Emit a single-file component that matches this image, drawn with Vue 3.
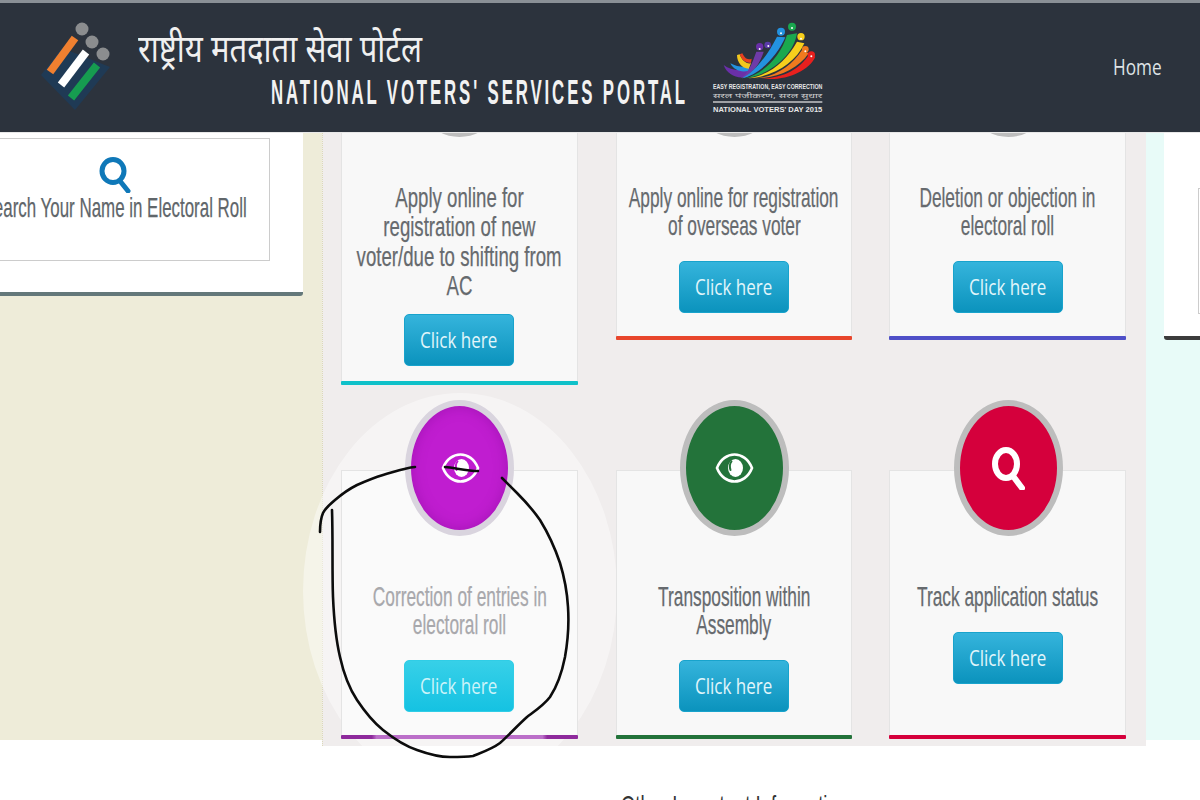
<script setup>
const rows = [
  [
    { lines: ['Apply online for', 'registration of new', 'voter/due to shifting from', 'AC'], color: '#0fc1c9', ring: '#bdbdbd', icon: 'eye', tight: true },
    { lines: ['Apply online for registration', 'of overseas voter'], color: '#e8462c', ring: '#bdbdbd', icon: 'eye' },
    { lines: ['Deletion or objection in', 'electoral roll'], color: '#4f50c8', ring: '#bdbdbd', icon: 'search' }
  ],
  [
    { lines: ['Correction of entries in', 'electoral roll'], color: '#c01dd0', bar: '#8e2a9c', ring: '#d9d4de', icon: 'eye', active: true },
    { lines: ['Transposition within', 'Assembly'], color: '#23733a', bar: '#23733a', ring: '#bdbdbd', icon: 'eye' },
    { lines: ['Track application status'], color: '#d5003c', bar: '#d5003c', ring: '#bdbdbd', icon: 'search' }
  ]
]
const dots = [[238, 147, 3], [264, 138, 3], [302, 100, 3], [335, 84, 3], [362, 116, 3], [375, 154, 3], [393, 169, 3]]
</script>

<template>
  <div class="page">
    <header class="header">
      <svg class="ballot" width="80" height="96" viewBox="36 22 80 96">
        <path d="M41 75 L62 48 L110 67 L75 110 Z" fill="#1f3a55" />
        <g stroke-width="8" stroke-linecap="butt">
          <path d="M75 38 L50 72" stroke="#f08030" />
          <path d="M86 52 L61 85" stroke="#ffffff" />
          <path d="M97 65 L71 98" stroke="#169c50" />
        </g>
        <g fill="#8b8d8f">
          <circle cx="82" cy="29" r="6.5" />
          <circle cx="92" cy="42" r="6.5" />
          <circle cx="103" cy="54" r="6.5" />
        </g>
      </svg>
      <div class="brand">
        <div class="hindi"><span class="hindi-in">राष्ट्रीय मतदाता सेवा पोर्टल</span></div>
        <div class="english"><span class="english-in">NATIONAL VOTERS' SERVICES PORTAL</span></div>
      </div>
      <svg class="nvd" width="112" height="95" viewBox="95 60 336 285">
        <path d="M130 195 C140 225 175 240 205 228 L205 205 C180 215 150 210 130 195 Z" fill="#6a2fa8" />
        <path d="M150 190 C160 212 185 218 205 212 L208 198 C190 204 170 200 150 190 Z" fill="#2392e0" />
        <path d="M170 165 C170 188 185 205 205 206 L212 190 C195 192 185 180 178 163 Z" fill="#f2c81e" />
        <path d="M178 163 C185 180 195 190 212 188 L214 176 C200 182 192 172 186 160 Z" fill="#e8401e" />
        <path d="M180 235 C205 220 215 190 228 155 L250 155 C240 190 215 225 180 235 Z" fill="#6f3ba8" />
        <path d="M185 235 C225 215 265 160 290 110 L315 112 C290 170 235 225 185 235 Z" fill="#2392e0" />
        <path d="M195 235 C250 220 300 170 320 105 L350 100 C340 165 270 225 195 235 Z" fill="#1aa84f" />
        <path d="M205 235 C270 225 320 180 350 125 L372 130 C345 190 280 230 205 235 Z" fill="#f7cf1c" />
        <path d="M225 235 C290 230 335 195 365 150 L385 160 C355 205 295 235 225 235 Z" fill="#f07a1e" />
        <path d="M245 235 C310 235 360 205 385 165 L405 170 C385 215 310 245 245 235 Z" fill="#e8201e" />
        <circle cx="238" cy="140" r="11" fill="#6a2fa8" />
        <circle cx="262" cy="135" r="10" fill="#5a3aa8" />
        <circle cx="302" cy="95" r="12" fill="#2392e0" />
        <circle cx="335" cy="80" r="12" fill="#1aa84f" />
        <circle cx="362" cy="110" r="11" fill="#f7cf1c" />
        <circle cx="375" cy="148" r="10" fill="#f07a1e" />
        <circle cx="393" cy="165" r="11" fill="#e8201e" />
        <circle v-for="d in dots" :key="d[0]" :cx="d[0]" :cy="d[1]" :r="d[2]" fill="#fff" />
        <text x="98" y="268" class="nvd-t" textLength="328" lengthAdjust="spacingAndGlyphs">EASY REGISTRATION, EASY CORRECTION</text>
        <text x="98" y="294" class="nvd-h" textLength="328" lengthAdjust="spacingAndGlyphs">सरल पंजीकरण, सरल सुधार</text>
        <rect x="98" y="304" width="328" height="4" fill="#d8d8d8" />
        <text x="98" y="335" class="nvd-t" textLength="328" lengthAdjust="spacingAndGlyphs">NATIONAL VOTERS' DAY 2015</text>
      </svg>
      <nav class="nav"><span class="nav-in">Home</span></nav>
    </header>

    <main class="main">
      <div class="left">
        <section class="panel">
          <div class="search-box">
            <svg class="search-blue" width="32" height="36" viewBox="0 0 32 36">
              <ellipse cx="14" cy="14" rx="11" ry="11.5" fill="none" stroke="#0f78b8" stroke-width="5" />
              <path d="M21 24 L29 34" stroke="#0f78b8" stroke-width="5" stroke-linecap="round" />
            </svg>
            <span class="search-text">Search Your Name in Electoral Roll</span>
          </div>
        </section>
      </div>

      <div class="center">
        <div v-for="(row, r) in rows" :key="r" class="row" :class="{ 'row-first': r === 0 }">
          <article v-for="card in row" :key="card.lines[0]" class="card" :class="{ active: card.active, tight: card.tight }">
            <div class="disc" :style="{ background: card.color, borderColor: card.ring }">
              <svg v-if="card.icon === 'eye'" width="40" height="32" viewBox="-2 0 40 32" fill="none" stroke="#fff">
                <path d="M1 16 C8 -2 29 -2 36 16 C29 34 8 34 1 16 Z" stroke-width="2.6" />
                <ellipse cx="19.5" cy="16" rx="7.5" ry="9" fill="#fff" stroke="none" />
                <path d="M15.5 9.5 C13.5 12 13.5 15 14.5 18" :stroke="card.color" stroke-width="2" stroke-linecap="round" />
              </svg>
              <svg v-else width="34" height="44" viewBox="0 0 34 44" fill="none" stroke="#fff" stroke-width="6">
                <ellipse cx="15" cy="18" rx="11" ry="14" />
                <path d="M22 30 L31 42" stroke-linecap="round" />
              </svg>
            </div>
            <h3 class="title">
              <span v-for="line in card.lines" :key="line" class="line">{{ line }}</span>
            </h3>
            <a class="btn"><span class="btn-in">Click here</span></a>
            <div class="bar" :style="{ background: card.bar || card.color }"></div>
          </article>
        </div>
      </div>

      <div class="right">
        <section class="panel-right">
          <div class="box-right"></div>
        </section>
      </div>
    </main>

    <h2 class="other"><span class="other-in">Other Important Information</span></h2>

    <div class="ripple"></div>

    <svg class="pen" width="1200" height="800" viewBox="0 0 1200 800" fill="none" stroke="#0c0c0c" stroke-width="2.6" stroke-linecap="round" stroke-linejoin="round">
      <path d="M415 467 C404 468 394 472 383 475 C373 478 366 481 357 485 C349 489 342 494 335 500 C329 505 325 509 323 513 C320 520 320 526 320 532" />
      <path d="M332 510 C333 540 332 570 333 597 C334 620 336 640 340 657 C344 675 349 688 357 700 C365 712 373 722 383 730 C393 738 405 746 417 750 C428 754 440 757 450 757 C458 757 466 757 473 756 C483 752 492 749 500 743 C509 735 518 725 527 717 C535 711 544 705 550 697 C558 685 562 672 565 657 C568 640 569 622 568 607 C567 590 564 576 560 563 C555 548 548 533 540 520 C533 510 525 501 517 493 C512 488 507 483 502 478" />
      <path d="M445 467 C455 468 468 471 478 471" />
    </svg>
  </div>
</template>

<style>
body { margin: 0; background: #fff; }
</style>

<style scoped>
.page {
  position: relative;
  width: 1200px;
  height: 800px;
  overflow: hidden;
  background: #fff;
  font-family: "Open Sans", "Noto Sans", sans-serif;
}
.header {
  position: relative;
  z-index: 5;
  box-sizing: border-box;
  height: 133px;
  display: flex;
  align-items: flex-start;
  background: #2c333d;
  border-top: 3px solid #8a9096;
  border-bottom: 1px solid #e8e8e8;
}
.ballot { margin: 19px 0 0 36px; flex: none; }
.brand { margin-left: 22px; width: 549px; flex: none; }
.hindi {
  margin-top: 25px;
  height: 44px;
  color: #f0f0f0;
  font-size: 38px;
  line-height: 50px;
  white-space: nowrap;
  font-family: "Noto Sans Devanagari", "Lohit Devanagari", "Noto Sans", sans-serif;
}
.hindi-in {
  display: inline-block;
  transform: scaleX(0.816);
  transform-origin: left center;
}
.english {
  margin: 0 0 0 133px;
  color: #f2f2f2;
  font-family: "Liberation Sans", sans-serif;
  font-size: 35px;
  font-weight: 700;
  line-height: 40px;
  letter-spacing: 6px;
  white-space: nowrap;
}
.english-in {
  display: inline-block;
  transform: scaleX(0.48);
  transform-origin: left center;
}
.nvd { margin: 17px 0 0 25px; flex: none; }
.nvd-t { font: bold 21px "Liberation Sans", sans-serif; fill: #e6e6e6; }
.nvd-h { font: 20px "Noto Sans Devanagari", "Noto Sans", sans-serif; fill: #cfcfcf; }
.nav {
  margin: 49px 0 0 auto;
  padding-right: 39px;
  width: 48px;
  color: #dfe3e6;
  font-size: 21px;
  line-height: 30px;
  white-space: nowrap;
}
.nav-in {
  display: inline-block;
  transform: scaleX(0.82);
  transform-origin: left center;
}
.main {
  display: flex;
  align-items: flex-start;
  margin-top: -133px;
}
.left {
  flex: none;
  box-sizing: border-box;
  width: 322px;
  height: 740px;
  padding-top: 133px;
  background: #eeecd9;
}
.panel {
  box-sizing: border-box;
  width: 303px;
  height: 163px;
  padding-top: 5px;
  background: #fff;
  border-bottom: 4px solid #64787a;
  border-bottom-right-radius: 3px;
}
.search-box {
  box-sizing: border-box;
  width: 311px;
  height: 123px;
  margin-left: -41px;
  padding-top: 18px;
  border: 1px solid #ccc;
  display: flex;
  flex-direction: column;
  align-items: center;
}
.search-text {
  margin-top: -1px;
  color: #60666a;
  font-family: "Liberation Sans", sans-serif;
  font-size: 28px;
  line-height: 32px;
  white-space: nowrap;
  transform: scaleX(0.604);
  -webkit-text-stroke: 0.25px currentColor;
}
.center {
  flex: none;
  box-sizing: border-box;
  width: 824px;
  height: 746px;
  padding: 71px 20px 0 18px;
  background: #f0eded;
  border-left: 1px dotted #dcd9b8;
}
.row {
  display: grid;
  grid-template-columns: 237px 237px 237px;
  column-gap: 37px;
  margin-top: 85px;
}
.row-first { align-items: start; margin-top: 0; }
.card {
  position: relative;
  z-index: 1;
  box-sizing: border-box;
  min-height: 269px;
  display: flex;
  flex-direction: column;
  align-items: center;
  background: #f8f8f8;
  border: 1px solid #e4e4e4;
  border-bottom: none;
}
.card:nth-child(2) { margin-left: 1px; }
.row-first .card { min-height: 0; }
.disc {
  box-sizing: border-box;
  width: 109px;
  height: 136px;
  margin-top: -71px;
  border: 6px solid #bdbdbd;
  border-radius: 50%;
  display: flex;
  align-items: center;
  justify-content: center;
}
.card:nth-child(3) .disc { margin-left: 1px; }
.title {
  align-self: stretch;
  display: flex;
  flex-direction: column;
  align-items: center;
  margin: 47px 0 0;
  color: #666a6e;
  font-family: "Liberation Sans", sans-serif;
  font-size: 28px;
  font-weight: 400;
  line-height: 28px;
  -webkit-text-stroke: 0.25px currentColor;
}
.line {
  white-space: nowrap;
  transform: scaleX(0.618);
}
.tight .title { margin-top: 46px; line-height: 29.3px; }
.tight .line { transform: scaleX(0.665); }
.btn {
  box-sizing: border-box;
  width: 110px;
  height: 52px;
  margin: 21px 1px 0 0;
  color: #e2f6fb;
  font-size: 21px;
  line-height: 50px;
  text-align: center;
  white-space: nowrap;
  background: linear-gradient(#35b4dc, #0b93bd);
  border: 1px solid #18a3cc;
  border-radius: 5px;
}
.card:nth-child(3) .btn { margin-right: 0; margin-left: 1px; }
.btn-in {
  display: inline-block;
  transform: scaleX(0.81);
}
.tight .btn { margin-top: 14px; }
.bar {
  align-self: stretch;
  height: 4px;
  margin: auto -1px 0;
  border-radius: 1px;
}
.row-first .bar { margin-top: 23px; }
.row-first .tight .bar { margin-top: 15px; }
.active { background: #fafafa; }
.active .disc { box-shadow: inset 0 0 14px rgba(110, 0, 130, 0.35); }
.active .title { color: #a8a8ac; }
.active .btn {
  background: linear-gradient(#37d0e8, #15c2e2);
  border-color: #30cde6;
  color: #cdf4fa;
}
.active .bar {
  background: linear-gradient(90deg, #8e2a9c 0 13%, #bb6fc9 15% 85%, #8e2a9c 87%) !important;
}
.right {
  flex: 1;
  height: 740px;
  padding: 133px 0 0 18px;
  box-sizing: border-box;
  background: #e8fbf8;
}
.panel-right {
  height: 207px;
  box-sizing: border-box;
  padding: 55px 0 0 34px;
  background: #fff;
  border-bottom: 4px solid #3c3c3c;
  border-bottom-left-radius: 3px;
}
.box-right {
  height: 124px;
  border: 1px solid #ccc;
  border-right: none;
}
.other {
  margin: 44px 0 0 621px;
  color: #333;
  font-family: "Liberation Sans", sans-serif;
  font-size: 28px;
  font-weight: 400;
  line-height: 32px;
  white-space: nowrap;
}
.other-in {
  display: inline-block;
  transform: scaleX(0.66);
  transform-origin: left center;
}
.ripple {
  position: absolute;
  left: 303px;
  top: 393px;
  width: 314px;
  height: 396px;
  border-radius: 50%;
  background: rgba(255, 255, 255, 0.42);
}
.pen {
  position: absolute;
  left: 0;
  top: 0;
  z-index: 6;
  pointer-events: none;
}
</style>
